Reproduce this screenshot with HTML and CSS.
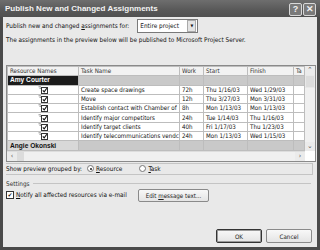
FILE: index.html
```html
<!DOCTYPE html>
<html lang="en">
<head>
  <meta charset="UTF-8">
  <title>Publish New and Changed Assignments</title>
  <link rel="stylesheet" href="styles.css">
</head>
<body>

  <div class="dialog">
    <!-- Title bar -->
    <div class="titlebar">
      <div class="title">Publish New and Changed Assignments</div>
      <div class="title-buttons">
        <span class="tbtn">?</span>
        <span class="tbtn">&#x2715;</span>
      </div>
    </div>

    <div class="content">
      <div class="for-row">
        <span>Publish new and changed <u>a</u>ssignments for:</span>
        <div class="select">
          <span class="select-text">Entire project</span>
          <span class="select-arrow">&#9660;</span>
        </div>
      </div>
      <div class="note">The assignments in the preview below will be published to Microsoft Project Server.</div>

      <!-- Preview grid -->
      <div class="grid-frame">
        <div class="grid-main">
          <table class="grid">
            <colgroup>
              <col style="width:71px"><col style="width:101px"><col style="width:24px">
              <col style="width:44px"><col style="width:46px"><col style="width:11px">
            </colgroup>
            <thead>
              <tr><th>Resource Names</th><th>Task Name</th><th>Work</th><th>Start</th><th>Finish</th><th>Ta</th></tr>
            </thead>
            <tbody id="rows"></tbody>
          </table>
          <div class="vscroll">
            <span class="sarrow">&#8963;</span>
            <span class="vthumb"></span>
            <span class="vtrack"></span>
            <span class="sarrow">&#8964;</span>
          </div>
        </div>
        <div class="hscroll">
          <span class="sarrow">&lsaquo;</span>
          <span class="hthumb"></span>
          <span class="htrack"></span>
          <span class="sarrow">&rsaquo;</span>
        </div>
      </div>

      <div class="group-row">
        <span>Show preview grouped by:</span>
        <label class="radio"><span class="dot on"></span><span><u>R</u>esource</span></label>
        <label class="radio"><span class="dot"></span><span><u>T</u>ask</span></label>
      </div>

      <div class="settings">
        <div class="settings-label">Settings</div>
        <div class="settings-row">
          <label class="check"><span class="box">&#10004;</span><span><u>N</u>otify all affected resources via e-mail</span></label>
          <button class="btn edit">Edit <u>m</u>essage text...</button>
        </div>
      </div>

      <div class="footer">
        <button class="btn ok">OK</button>
        <button class="btn">Cancel</button>
      </div>
    </div>
  </div>

  <script>
    const tasks = [
      ["Create space drawings", "72h", "Thu 1/16/03", "Wed 1/29/03"],
      ["Move", "12h", "Thu 3/27/03", "Mon 3/31/03"],
      ["Establish contact with Chamber of", "8h", "Mon 1/13/03", "Mon 1/13/03"],
      ["Identify major competitors", "24h", "Tue 1/14/03", "Thu 1/16/03"],
      ["Identify target clients", "40h", "Fri 1/17/03", "Thu 1/23/03"],
      ["Identify telecommunications vendc", "24h", "Mon 1/13/03", "Wed 1/15/03"]
    ];

    const icon = '<svg class="ticon" width="10" height="8" viewBox="0 0 10 8">' +
      '<rect x="3.5" y="1.5" width="6" height="6" fill="#fff" stroke="#333"/>' +
      '<path d="M4.8 4.3 L6.2 5.8 L8.8 2.2" fill="none" stroke="#111" stroke-width="1.1"/>' +
      '<path d="M0.5 0.8 L3 0.8 M1.5 2.4 L3 2.4" stroke="#777" stroke-width="0.8"/></svg>';

    const body = document.getElementById("rows");
    let html = '<tr class="res dark"><td>Amy Courter</td><td></td><td></td><td></td><td></td><td></td></tr>';
    tasks.forEach(t => {
      html += `<tr><td class="ic">${icon}</td><td>${t[0]}</td><td>${t[1]}</td><td>${t[2]}</td><td>${t[3]}</td><td></td></tr>`;
    });
    html += '<tr class="res light"><td>Angie Okonski</td><td></td><td></td><td></td><td></td><td></td></tr>';
    body.innerHTML = html;
  </script>
</body>
</html>
```

FILE: styles.css
```css
body {
  margin: 0;
  font-family: "DejaVu Sans Condensed", "Liberation Sans", sans-serif;
  background: #3a3a3a;
}

.dialog {
  width: 320px;
  height: 250px;
  box-sizing: border-box;
  border: 3px solid #4a4a4a;
  border-top: none;
  border-bottom-width: 3px;
  background: #e9e9e9;
  display: flex;
  flex-direction: column;
}

/* Title bar */
.titlebar {
  height: 17px;
  margin: 0 -3px;
  background: linear-gradient(#6e6e6e, #585858 60%, #505050);
  display: flex;
  align-items: center;
  justify-content: space-between;
  padding: 0 4px 0 5px;
}

.title {
  color: #f4f4f4;
  font-family: "Liberation Sans", sans-serif;
  font-weight: bold;
  font-size: 8px;
}

.title-buttons {
  display: flex;
  gap: 1px;
  margin-top: 2px;
}

.tbtn {
  width: 11px;
  height: 11px;
  border: 1px solid #d8d8d8;
  border-radius: 2px;
  background: #7a7a7a;
  color: #f0f0f0;
  font-size: 9px;
  font-weight: bold;
  line-height: 11px;
  text-align: center;
  font-family: "Liberation Sans", sans-serif;
}

.content {
  flex: 1;
  padding: 0 4px 0 3px;
  font-size: 6.4px;
  color: #111;
  display: flex;
  flex-direction: column;
}

.for-row {
  display: flex;
  align-items: center;
  gap: 8px;
  margin-top: 1px;
  height: 15px;
}

.select {
  width: 57px;
  height: 12px;
  border: 1px solid #7a7a7a;
  background: #fff;
  display: flex;
  align-items: center;
  justify-content: space-between;
  padding-left: 2px;
}

.select-arrow {
  width: 7px;
  height: 10px;
  margin-right: 1px;
  background: #e4e4e4;
  border: 1px solid #aaa;
  font-size: 4px;
  line-height: 10px;
  text-align: center;
}

.note {
  margin-top: 3px;
}

/* Grid */
.grid-frame {
  margin-top: 21px;
  width: 308px;
  border: 1px solid #8a8a8a;
  background: #fff;
}

.grid-main {
  display: flex;
}

.grid {
  table-layout: fixed;
  width: 297px;
  border-collapse: collapse;
  font-size: 6.2px;
}

.grid th,
.grid td {
  height: 8.3px;
  padding: 0 0 0 2px;
  border: 1px solid #bdbdbd;
  white-space: nowrap;
  overflow: hidden;
  text-overflow: clip;
  text-align: left;
  line-height: 8px;
}

.grid th {
  font-weight: normal;
  background: #f2f2f2;
  color: #333;
}

.grid td.ic {
  text-align: center;
  padding: 0;
}

.ticon {
  vertical-align: middle;
}

.grid tr.res td {
  background: #c9c9c9;
}

.grid tr.res td:first-child {
  font-weight: bold;
  font-family: "Liberation Sans", sans-serif;
  font-size: 6.6px;
}

.grid tr.dark td:first-child {
  background: #1c1c1c;
  color: #fff;
}

.grid tr.light td:first-child {
  background: #d8d8d8;
}

.vscroll {
  width: 10px;
  background: #f0f0f0;
  display: flex;
  flex-direction: column;
  align-items: center;
}

.sarrow {
  width: 10px;
  height: 9px;
  font-size: 7px;
  line-height: 9px;
  text-align: center;
  color: #555;
  background: #ebebeb;
}

.vthumb {
  width: 8px;
  height: 11px;
  background: #dcdcdc;
  border: 1px solid #e8e8e8;
}

.vtrack {
  flex: 1;
}

.hscroll {
  display: flex;
  height: 9px;
  background: #f0f0f0;
  border-top: 1px solid #ddd;
  width: 298px;
}

.hthumb {
  width: 7px;
  background: #dcdcdc;
}

.htrack {
  flex: 1;
}

/* Grouping */
.group-row {
  display: flex;
  align-items: center;
  height: 10px;
  width: 306px;
  margin-top: 1px;
  border: 1px solid #c4c4c4;
  border-left: none;
}

.radio {
  display: flex;
  align-items: center;
  gap: 2px;
  margin-left: 5px;
}

.radio + .radio {
  margin-left: 17px;
}

.dot {
  width: 5px;
  height: 5px;
  border: 1px solid #777;
  border-radius: 50%;
  background: #fff;
  position: relative;
}

.dot.on::after {
  content: "";
  position: absolute;
  left: 1.5px;
  top: 1.5px;
  width: 2px;
  height: 2px;
  border-radius: 50%;
  background: #222;
}

/* Settings */
.settings {
  margin-top: 5px;
}

.settings-label {
  display: flex;
  align-items: center;
  gap: 3px;
  color: #333;
}

.settings-label::after {
  content: "";
  flex: 1;
  border-top: 1px solid #c4c4c4;
  margin-right: 2px;
}

.settings-row {
  display: flex;
  align-items: center;
  margin-top: 1px;
}

.check {
  display: flex;
  align-items: center;
  gap: 2px;
  width: 132px;
}

.box {
  width: 6px;
  height: 6px;
  border: 1px solid #333;
  background: #fff;
  font-size: 6px;
  line-height: 6px;
  text-align: center;
}

.btn {
  font-family: "DejaVu Sans Condensed", "Liberation Sans", sans-serif;
  font-size: 6.2px;
  color: #222;
  background: linear-gradient(#f8f8f8, #e4e4e4);
  border: 1px solid #8a8a8a;
  border-radius: 2px;
  height: 13px;
  padding: 0;
}

.btn.edit {
  width: 71px;
}

.footer {
  margin-top: auto;
  margin-bottom: 4px;
  display: flex;
  justify-content: flex-end;
  gap: 4px;
  padding-right: 1px;
}

.footer .btn {
  width: 46px;
  height: 14px;
}

.btn.ok {
  border: 1px solid #333;
  box-shadow: inset 0 0 0 1px #9a9a9a;
}
```
